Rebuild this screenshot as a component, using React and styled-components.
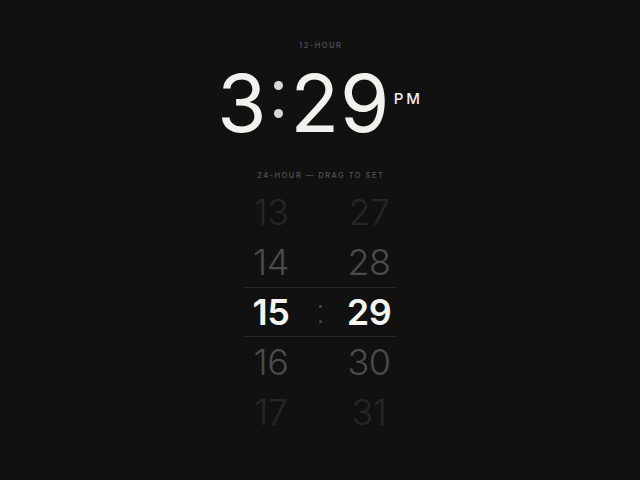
import React from "react";
import styled, { createGlobalStyle } from "styled-components";

const Global = createGlobalStyle`
  html, body { margin: 0; padding: 0; background: #111111; }
  body { font-family: Inter, "Noto Sans", sans-serif; }
`;

const Page = styled.div`
  min-height: 480px;
  display: flex;
  flex-direction: column;
  align-items: center;
  padding-top: 40px;
  box-sizing: border-box;
  background: #111111;
`;

const Label = styled.div`
  font-size: 7.5px;
  line-height: 12px;
  letter-spacing: 1.5px;
  font-weight: 500;
  color: ${(p) => p.$color || "#555555"};
  text-transform: uppercase;
  margin-top: ${(p) => p.$mt || 0}px;
  padding-left: 1.5px;
`;

const Clock = styled.div`
  display: flex;
  align-items: flex-start;
  margin-top: 11px;
  height: 80px;
  color: #f1f1ee;
`;

const Digits = styled.span`
  font-size: 80px;
  line-height: 80px;
  font-weight: 400;
  letter-spacing: -2px;
  font-variant-numeric: tabular-nums;
`;

const BigColon = styled.span`
  display: flex;
  flex-direction: column;
  gap: 19px;
  margin: 18px 6px 0 7px;
`;

const BigDot = styled.span`
  width: 9px;
  height: 9px;
  border-radius: 50%;
  background: #d8d8d6;
`;

const Meridiem = styled.span`
  font-size: 15px;
  line-height: 15px;
  font-weight: 500;
  letter-spacing: 3px;
  margin-top: 28px;
  margin-left: 5px;
  color: #eeeeea;
`;

const Wheel = styled.div`
  display: flex;
  flex-direction: column;
  width: 154px;
  margin-top: 5px;
`;

const Row = styled.div`
  display: grid;
  grid-template-columns: 56px 42px 56px;
  height: 50px;
  box-sizing: border-box;
  align-items: center;
  border-top: 1px solid ${(p) => (p.$selected ? "#262626" : "transparent")};
  border-bottom: 1px solid ${(p) => (p.$selected ? "#262626" : "transparent")};
`;

const Cell = styled.span`
  text-align: center;
  font-size: 36px;
  line-height: 48px;
  font-weight: ${(p) => (p.$selected ? 600 : 300)};
  color: ${(p) => p.$color};
  letter-spacing: -0.5px;
`;

const SmallColon = styled.span`
  display: flex;
  flex-direction: column;
  align-items: center;
  gap: 12px;
  margin-top: 3px;
`;

const SmallDot = styled.span`
  width: 3px;
  height: 3px;
  border-radius: 50%;
  background: #4a4a4a;
`;

const rows = [
  { h: "13", m: "27", color: "#262626" },
  { h: "14", m: "28", color: "#4b4b4b" },
  { h: "15", m: "29", color: "#f4f4f2", selected: true },
  { h: "16", m: "30", color: "#4b4b4b" },
  { h: "17", m: "31", color: "#262626" },
];

export default function App() {
  return (
    <>
      <Global />
      <Page>
        <Label>12-Hour</Label>
        <Clock>
          <Digits>3</Digits>
          <BigColon>
            <BigDot />
            <BigDot />
          </BigColon>
          <Digits>29</Digits>
          <Meridiem>PM</Meridiem>
        </Clock>
        <Label $mt={27}>24-Hour — Drag to set</Label>
        <Wheel>
          {rows.map((r) => (
            <Row key={r.h} $selected={r.selected}>
              <Cell $color={r.color} $selected={r.selected}>{r.h}</Cell>
              {r.selected ? (
                <SmallColon>
                  <SmallDot />
                  <SmallDot />
                </SmallColon>
              ) : (
                <span />
              )}
              <Cell $color={r.color} $selected={r.selected}>{r.m}</Cell>
            </Row>
          ))}
        </Wheel>
      </Page>
    </>
  );
}
